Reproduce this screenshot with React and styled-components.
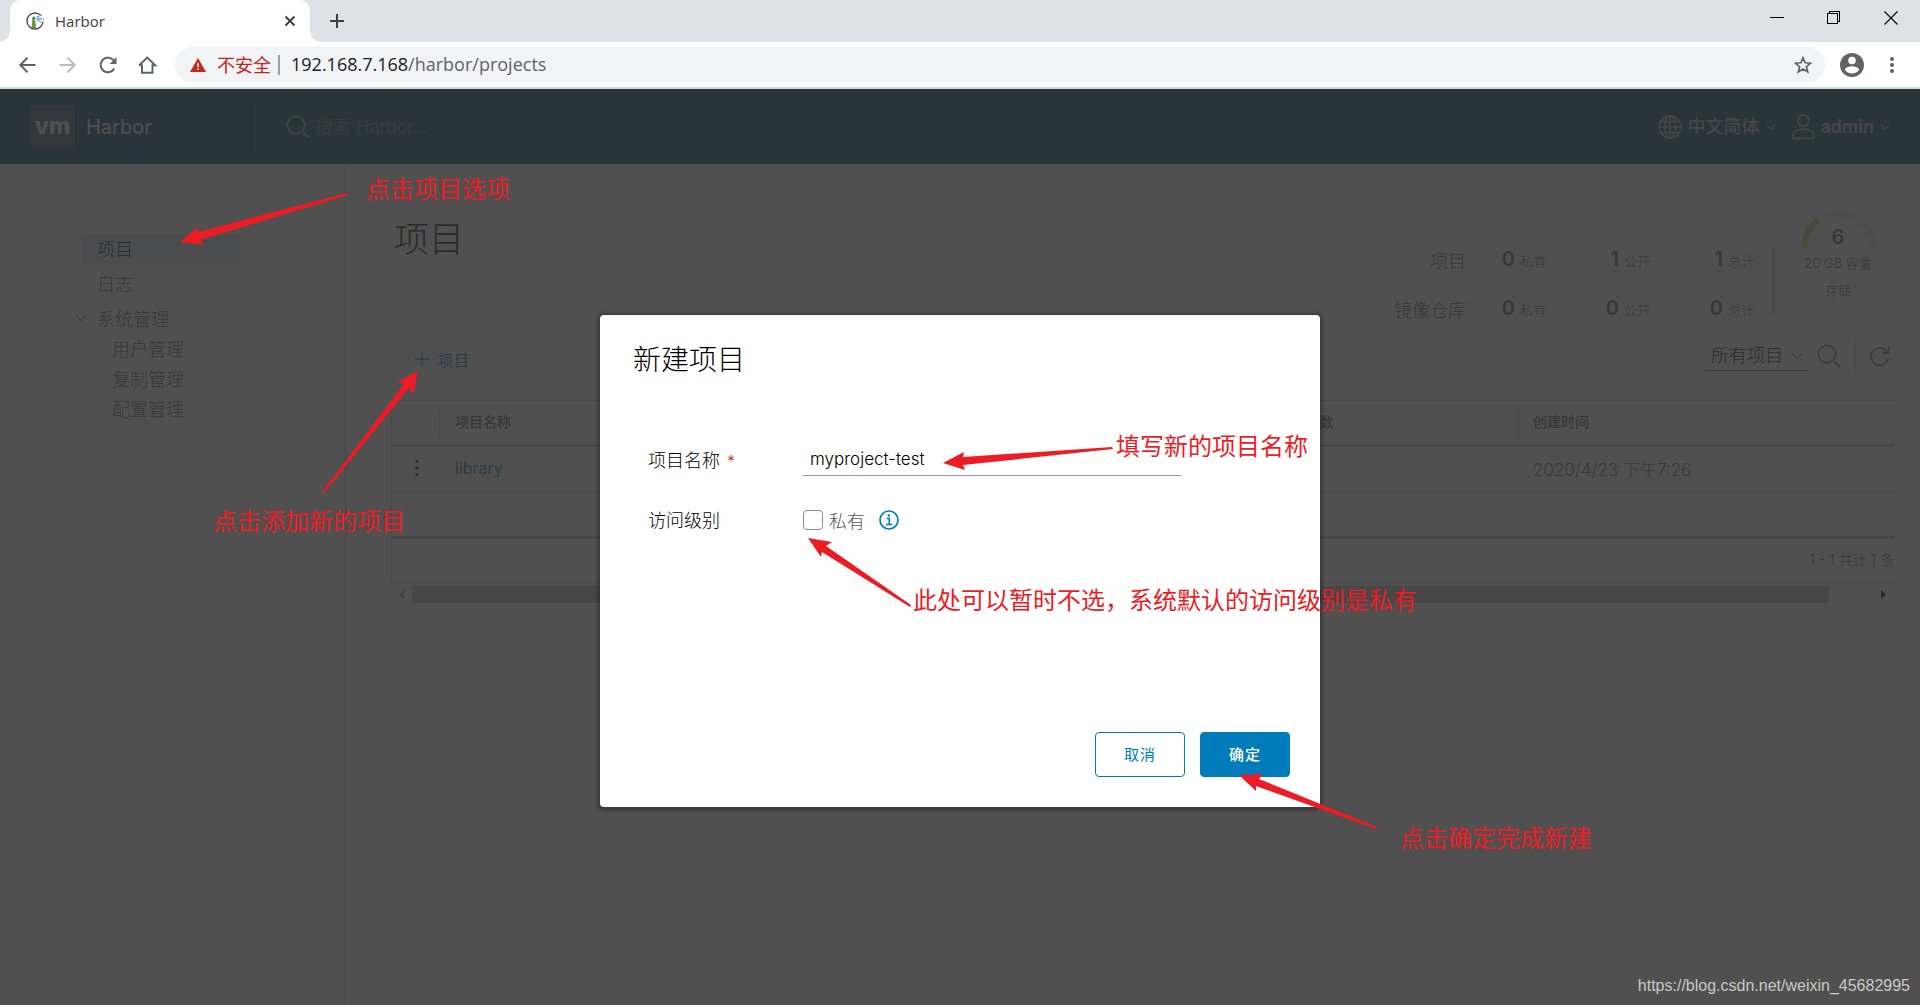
import React from 'react'
import styled, { createGlobalStyle } from 'styled-components'

const uiFont = `"Open Sans", "Noto Sans CJK SC", sans-serif`;
const pageFont = `Inter, "Noto Sans CJK SC", sans-serif`;

const GlobalStyle = createGlobalStyle`
* {
    box-sizing: border-box;
}
body {
    margin: 0;
    font-family: ${pageFont};
    color: #313131;
}
button, input, select {
    font-family: inherit;
}
`;

/* ---------- browser window ---------- */

const Window = styled.div`
position: relative;
display: flex;
flex-direction: column;
min-height: 100vh;
overflow: hidden;
`;

const TabStrip = styled.div`
display: flex;
align-items: stretch;
height: 42px;
padding: 0 22px 0 10px;
background-color: #dee1e6;
font-family: ${uiFont};
`;

const Tab = styled.div`
position: relative;
display: flex;
align-items: center;
gap: 11px;
width: 300px;
padding: 0 14px 0 16px;
border-radius: 10px 10px 0 0;
background-color: #fff;
font-size: 15px;
color: #3c4043;

&::before, &::after {
    content: "";
    position: absolute;
    bottom: 0;
    width: 10px;
    height: 10px;
}
&::before {
    left: -10px;
    background: radial-gradient(circle at 0 0, transparent 9px, #fff 10px);
}
&::after {
    right: -10px;
    background: radial-gradient(circle at 100% 0, transparent 9px, #fff 10px);
}
`;

const TabTitle = styled.span`
flex: 1;
`;

const IconButton = styled.button`
display: flex;
align-items: center;
justify-content: center;
padding: 0;
border: none;
background: none;
color: ${(props) => props.$color || "#5f6368"};
cursor: pointer;
`;

const NewTab = styled(IconButton)`
width: 28px;
margin-left: 13px;
`;

const WindowButtons = styled.div`
display: flex;
gap: 43px;
margin-left: auto;
padding-bottom: 6px;
`;

const Toolbar = styled.div`
display: flex;
align-items: center;
height: 47px;
padding: 0 25px 0 18px;
border-bottom: 2px solid #d9dbe0;
background-color: #fff;
font-family: ${uiFont};
`;

const NavButtons = styled.div`
display: flex;
gap: 20px;
width: 157px;
`;

const AddressBar = styled.div`
display: flex;
flex: 1;
align-items: center;
height: 35px;
padding: 0 13px 0 15px;
border-radius: 18px;
background-color: #f1f3f4;
font-size: 18px;
`;

const Unsafe = styled.span`
margin: 0 8px 0 11px;
padding-right: 7px;
border-right: 2px solid #9aa0a6;
line-height: 20px;
color: #c5221f;
`;

const Url = styled.span`
flex: 1;
padding-bottom: 2px;
margin-left: 3px;
color: #5f6368;

b {
    font-weight: 400;
    color: #202124;
}
`;

const BarActions = styled.div`
display: flex;
align-items: center;
gap: 25px;
margin-left: 15px;
`;

/* ---------- harbor page ---------- */

const Page = styled.div`
position: relative;
display: flex;
flex: 1;
flex-direction: column;
background-color: #fafafa;
`;

const Header = styled.header`
display: flex;
align-items: center;
height: 75px;
padding: 0 30px;
background-color: #004a70;
color: #fafafa;
`;

const Brand = styled.a`
display: flex;
align-items: center;
gap: 11px;
width: 226px;
height: 51px;
border-right: 1px solid #285c7a;
font-size: 20px;
color: inherit;
text-decoration: none;
`;

const Logo = styled.span`
width: 45px;
border-radius: 4px;
background-color: #335a78;
font-size: 23px;
font-weight: 800;
line-height: 43px;
text-align: center;
`;

const Search = styled.label`
display: flex;
flex: 1;
align-items: center;
gap: 4px;
padding-left: 30px;
color: #b5c4cf;
`;

const SearchInput = styled.input`
width: 240px;
padding: 0 0 1px 1px;
border: none;
outline: none;
background: none;
font-size: 18px;
font-weight: 300;
color: #fff;

&::placeholder {
    color: #6d8798;
}
`;

const HeaderMenu = styled.button`
display: flex;
align-items: center;
gap: 6px;
margin-left: 16px;
padding: 0;
border: none;
background: none;
font-size: 18px;
font-weight: ${(props) => props.$weight};
line-height: 26px;
color: #b4c2cc;
`;

const Body = styled.div`
display: flex;
flex: 1;
`;

const Sidebar = styled.nav`
display: flex;
flex-direction: column;
width: 346px;
padding: 70px 105px 0 75px;
border-right: 1px solid #ccc;
font-size: 18px;
font-weight: 300;
`;

const NavLink = styled.a`
display: flex;
align-items: center;
height: 30px;
margin: 0 0 ${(props) => (props.$sub ? "0" : "5px")} 8px;
padding: 0 0 2px ${(props) => (props.$sub ? "29px" : "14px")};
border-radius: 3px 0 0 3px;
background-color: ${(props) => (props.$active ? "#d9e4ea" : "transparent")};
color: ${(props) => (props.$active ? "#000" : "#565656")};
text-decoration: none;
`;

const NavGroup = styled.button`
display: flex;
align-items: center;
gap: 10px;
height: 30px;
padding: 0 0 2px;
border: none;
background: none;
font-size: 18px;
font-weight: 300;
color: #565656;
`;

const Main = styled.main`
flex: 1;
min-width: 0;
padding: 46px 26px 0 45px;
`;

const Summary = styled.div`
display: flex;
justify-content: space-between;
align-items: flex-start;
min-height: 131px;
`;

const Title = styled.h1`
margin: 6px 0 0 3px;
font-size: 35px;
font-weight: 300;
line-height: 46px;
color: #000;
`;

const Stats = styled.div`
display: flex;
align-items: flex-start;
padding-right: 18px;
color: #565656;
`;

const StatGrid = styled.div`
display: grid;
grid-template-columns: 72px 80px 104px 104px;
row-gap: 15px;
margin-top: 33px;
text-align: right;
line-height: 32px;
`;

const StatLabel = styled.span`
font-size: 18px;
font-weight: 300;
line-height: 38px;
height: 32px;
white-space: nowrap;
`;

const Stat = styled.span`
font-size: 13px;
font-weight: 300;
white-space: nowrap;

b {
    margin-right: 5px;
    font-size: 20px;
    font-weight: 600;
}
`;

const StatDivider = styled.div`
width: 3px;
height: 67px;
margin: 38px 25px 0 18px;
background-color: #d8d8d8;
`;

const Gauge = styled.div`
display: flex;
flex-direction: column;
align-items: center;
width: 76px;
font-size: 13px;
font-weight: 300;
line-height: 27px;
white-space: nowrap;
`;

const GaugeDial = styled.div`
position: relative;
height: 40px;

b {
    position: absolute;
    inset: 14px 0 0;
    font-size: 20px;
    font-weight: 600;
    text-align: center;
}
`;

const Actions = styled.div`
display: flex;
align-items: center;
height: 30px;
margin-bottom: 29px;
padding: 0 4px 0 23px;
color: #565656;
`;

const NewProject = styled.button`
display: flex;
align-items: center;
gap: 8px;
margin-right: auto;
padding: 6px 0 0;
border: none;
background: none;
font-size: 15px;
color: #007cbb;
letter-spacing: 1px;
`;

const Filter = styled.label`
position: relative;
display: flex;
align-items: center;
width: 104px;
margin-right: 8px;
border-bottom: 1px solid #565656;
color: #9a9a9a;

svg {
    position: absolute;
    right: 6px;
}
`;

const FilterSelect = styled.select`
appearance: none;
width: 100%;
height: 28px;
padding: 0 0 1px 6px;
border: none;
background: none;
font-size: 18px;
font-weight: 300;
color: #000;
`;

const Separator = styled.div`
width: 2px;
height: 30px;
margin: 0 14px 0 13px;
background-color: #ccc;
`;

const GridView = styled.div`
overflow: hidden;
`;

const Table = styled.table`
width: calc(100% + 47px);
border: 1px solid #ccc;
border-radius: 4px;
border-spacing: 0;
table-layout: fixed;
text-align: left;
`;

const HeadCell = styled.th`
position: relative;
width: ${(props) => props.$width};
height: 46px;
padding: 0 16px 3px;
border-bottom: 3px solid #c4c4c4;
font-size: 14px;
font-weight: 500;
color: #565656;

&:not(:first-child)::before {
    content: "";
    position: absolute;
    left: 0;
    top: 8px;
    width: 1px;
    height: 30px;
    background-color: #ccc;
}
`;

const Cell = styled.td`
height: 46px;
padding: 0 16px 3px;
border-bottom: ${(props) => (props.$last ? "3px solid #c4c4c4" : "1px solid #ccc")};
font-size: ${(props) => (props.$wide ? "17px" : "16px")};
font-weight: 300;
color: #565656;

a {
    color: #007cbb;
    font-weight: 400;
    text-decoration: none;
}
`;

const FootCell = styled.td`
height: 43px;
padding: 0 46px 4px 16px;
font-size: 14px;
font-weight: 300;
text-align: right;
color: #565656;
`;

const ScrollBar = styled.div`
display: flex;
align-items: center;
justify-content: space-between;
height: 17px;
margin-top: 3px;
padding: 0 8px;
color: #8a8a8a;
`;

const ScrollThumb = styled.div`
flex: 1;
height: 17px;
margin: 0 52px 0 8px;
background-color: #c1c1c1;
`;

/* ---------- dialog ---------- */

const Backdrop = styled.div`
position: absolute;
inset: 0;
display: flex;
align-items: center;
justify-content: center;
padding-top: 28px;
background-color: rgba(49, 49, 49, 0.85);
`;

const Modal = styled.form`
display: flex;
flex-direction: column;
width: 720px;
padding: 30px;
border-radius: 4px;
background-color: #fff;
box-shadow: 0 1px 3px 3px rgba(0, 0, 0, 0.25);
`;

const ModalTitle = styled.h2`
margin: 0 0 0 3px;
font-size: 28px;
font-weight: 300;
line-height: 30px;
color: #000;
`;

const Fields = styled.div`
display: flex;
flex-direction: column;
gap: 28px;
min-height: 357px;
padding: 69px 0 0 18px;
`;

const Field = styled.div`
display: flex;
align-items: center;
height: 32px;
font-size: 18px;
font-weight: 300;
`;

const FieldLabel = styled.label`
width: 155px;
padding-bottom: 3px;
color: #000;

span {
    margin-left: 7px;
    font-size: 16px;
    color: #c92100;
}
`;

const TextInput = styled.input`
width: 378px;
height: 32px;
padding: 0 7px 2px;
border: none;
border-bottom: 1px solid #9a9a9a;
outline: none;
font-size: 17px;
font-weight: 300;
color: #000;
`;

const Checkbox = styled.input`
appearance: none;
width: 20px;
height: 20px;
margin: 0 6px 0 0;
border: 1px solid #8c8c8c;
border-radius: 4px;
`;

const CheckLabel = styled.label`
margin-right: 14px;
color: #565656;
`;

const ModalButtons = styled.div`
display: flex;
justify-content: flex-end;
gap: 15px;
`;

const Button = styled.button`
width: 90px;
height: 45px;
padding: 0 0 2px;
border: 1px solid #007cbb;
border-radius: 4px;
background-color: ${(props) => (props.$primary ? "#007cbb" : "#fff")};
font-size: 15px;
font-weight: ${(props) => (props.$primary ? 500 : 400)};
letter-spacing: 1px;
color: ${(props) => (props.$primary ? "#fff" : "#007cbb")};
`;

/* ---------- notes drawn over the page ---------- */

const Arrows = styled.svg`
position: absolute;
left: 0;
top: 0;
fill: #ed1c24;
pointer-events: none;
`;

const Note = styled.span`
position: absolute;
left: ${(props) => props.$x}px;
top: ${(props) => props.$y}px;
font-family: "Noto Sans CJK SC", sans-serif;
font-size: 24px;
line-height: 32px;
color: #ed1c24;
white-space: nowrap;
`;

const Watermark = styled.span`
position: absolute;
right: 10px;
bottom: 9px;
font-family: "Liberation Sans", Arial, sans-serif;
font-size: 16px;
line-height: 20px;
color: #c8c8c8;
`;

const notes = [
    { x: 366, y: 172, text: "点击项目选项" },
    { x: 213, y: 504, text: "点击添加新的项目" },
    { x: 1116, y: 429, text: "填写新的项目名称" },
    { x: 913, y: 583, text: "此处可以暂时不选，系统默认的访问级别是私有" },
    { x: 1400, y: 821, text: "点击确定完成新建" },
];

const arrows = [
    "180,242 198,227 198,232 347,193 348,195 200,240 204,245",
    "418,371 397,382 404,384 322,492 324,493 409,388 413,394",
    "943,463 964,452 963,457 1112,447 1113,449 963,465 965,470",
    "808,538 832,542 826,546 911,605 910,607 822,552 821,557",
    "1239,775 1263,774 1259,779 1377,827 1376,829 1256,786 1256,791",
];

const stats = [
    { label: "项目", values: [[0, "私有"], [1, "公开"], [1, "总计"]] },
    { label: "镜像仓库", values: [[0, "私有"], [0, "公开"], [0, "总计"]] },
];

const Chevron = ({ size = 12, color = "currentColor" }) => (
    <svg width={size} height={size} viewBox="0 0 12 12" fill="none" stroke={color} strokeWidth="1.3">
        <path d="M1 3.5l5 5 5-5" />
    </svg>
);

const Magnifier = () => (
    <svg width="24" height="24" viewBox="0 0 24 24" fill="none" stroke="currentColor" strokeWidth="1.3">
        <circle cx="10" cy="10" r="8.7" />
        <path d="M17 17.5l5.5 5" strokeWidth="1.8" />
    </svg>
);

function BrowserChrome() {
    return (
        <>
            <TabStrip>
                <Tab>
                    <svg width="18" height="18" viewBox="0 0 18 18" fill="none">
                        <circle cx="9" cy="9" r="8" stroke="#505050" strokeWidth="1.4" />
                        <path d="M5.5 16l.8-8h3l.8 8z" fill="#6a9a3c" />
                        <path d="M6 6h3.5v1.5H6zM7 4.5h1.5V6H7z" fill="#3d6b24" />
                        <path d="M9.5 3h8v7h-8z" fill="#fff" />
                        <path d="M10 5.5l6-2.5M10.5 6.5l6 .5M10.5 7.5l5 3" stroke="#6f9fd8" strokeWidth="1.3" />
                    </svg>
                    <TabTitle>Harbor</TabTitle>
                    <IconButton aria-label="关闭标签页" $color="#3c4043">
                        <svg width="12" height="12" viewBox="0 0 12 12" stroke="currentColor" strokeWidth="1.9">
                            <path d="M1.5 1.5l9 9M10.5 1.5l-9 9" />
                        </svg>
                    </IconButton>
                </Tab>
                <NewTab aria-label="打开新的标签页" $color="#3c4043">
                    <svg width="16" height="16" viewBox="0 0 16 16" stroke="currentColor" strokeWidth="2">
                        <path d="M8 1v14M1 8h14" />
                    </svg>
                </NewTab>
                <WindowButtons>
                    <IconButton aria-label="最小化" $color="#000">
                        <svg width="14" height="14" viewBox="0 0 14 14" stroke="currentColor" shapeRendering="crispEdges">
                            <path d="M0 6.5h14" />
                        </svg>
                    </IconButton>
                    <IconButton aria-label="还原" $color="#000">
                        <svg width="14" height="14" viewBox="0 0 14 14" fill="none" stroke="currentColor" shapeRendering="crispEdges">
                            <path d="M.5 2.5h10v10h-10zM2.5 2.5v-2h10v10h-2" />
                        </svg>
                    </IconButton>
                    <IconButton aria-label="关闭" $color="#000">
                        <svg width="14" height="14" viewBox="0 0 14 14" stroke="currentColor" strokeWidth="1.1">
                            <path d="M.5.5l13 13M13.5.5l-13 13" />
                        </svg>
                    </IconButton>
                </WindowButtons>
            </TabStrip>
            <Toolbar>
                <NavButtons>
                    <IconButton aria-label="后退">
                        <svg width="20" height="18" viewBox="0 0 20 18" fill="none" stroke="currentColor" strokeWidth="2">
                            <path d="M17.5 9h-15M9.5 1.8L2.3 9l7.2 7.2" />
                        </svg>
                    </IconButton>
                    <IconButton aria-label="前进" $color="#babcbe">
                        <svg width="20" height="18" viewBox="0 0 20 18" fill="none" stroke="currentColor" strokeWidth="2">
                            <path d="M1.5 9h15M9.5 1.8L16.7 9l-7.2 7.2" />
                        </svg>
                    </IconButton>
                    <IconButton aria-label="重新加载">
                        <svg width="20" height="18" viewBox="0 0 20 18" fill="none" stroke="currentColor" strokeWidth="2">
                            <path d="M16.3 12.5A7.3 7.3 0 1 1 15.5 4.2" />
                            <path d="M18.5 1v7h-7z" fill="currentColor" stroke="none" />
                        </svg>
                    </IconButton>
                    <IconButton aria-label="主页">
                        <svg width="20" height="18" viewBox="0 0 20 18" fill="none" stroke="currentColor" strokeWidth="2">
                            <path d="M4 8.5v8.3h10.500V8.5M1.2 9.3L9.2 1.6l8 7.7h-3M4.2 9.3h-3" />
                        </svg>
                    </IconButton>
                </NavButtons>
                <AddressBar>
                    <svg width="16" height="14" viewBox="0 0 16 14">
                        <path d="M8 0l8 14H0z" fill="#c5291f" />
                        <path d="M7.2 5h1.6v4H7.2zM7.2 10.2h1.6v1.6H7.2z" fill="#fff" />
                    </svg>
                    <Unsafe>不安全</Unsafe>
                    <Url><b>192.168.7.168</b>/harbor/projects</Url>
                    <IconButton aria-label="收藏">
                        <svg width="18" height="18" viewBox="0 0 18 18" fill="none" stroke="currentColor" strokeWidth="1.7">
                            <path d="M9 1.8l2.1 5 5.4.4-4.1 3.5 1.3 5.2L9 13.1l-4.7 2.8 1.3-5.2-4.1-3.5 5.4-.4z" />
                        </svg>
                    </IconButton>
                </AddressBar>
                <BarActions>
                    <IconButton aria-label="用户">
                        <svg width="24" height="24" viewBox="0 0 24 24">
                            <circle cx="12" cy="12" r="12" fill="currentColor" />
                            <circle cx="12" cy="7.5" r="3.8" fill="#fff" />
                            <path d="M4.7 16.5c1.2-2.5 4.7-3.3 7.3-3.3s6.1.8 7.3 3.3a8.7 8.7 0 0 1-14.6 0z" fill="#fff" />
                        </svg>
                    </IconButton>
                    <IconButton aria-label="菜单">
                        <svg width="6" height="18" viewBox="0 0 6 18" fill="currentColor">
                            <circle cx="3" cy="3" r="2" />
                            <circle cx="3" cy="9" r="2" />
                            <circle cx="3" cy="15" r="2" />
                        </svg>
                    </IconButton>
                </BarActions>
            </Toolbar>
        </>
    )
}

function HarborHeader() {
    return (
        <Header>
            <Brand href="#"><Logo>vm</Logo>Harbor</Brand>
            <Search>
                <Magnifier />
                <SearchInput type="text" placeholder="搜索 Harbor..." aria-label="搜索 Harbor" />
            </Search>
            <HeaderMenu $weight="500">
                <svg width="24" height="24" viewBox="0 0 24 24" fill="none" stroke="currentColor" strokeWidth="1.3">
                    <circle cx="12" cy="12" r="11" />
                    <ellipse cx="12" cy="12" rx="5.5" ry="11" />
                    <path d="M12 1v22M1 12h22M3 6.5h18M3 17.5h18" />
                </svg>
                中文简体
                <Chevron size={10} />
            </HeaderMenu>
            <HeaderMenu $weight="600">
                <svg width="23" height="26" viewBox="0 0 23 26" fill="none" stroke="currentColor" strokeWidth="1.5">
                    <circle cx="11.5" cy="6.5" r="5.5" />
                    <path d="M1 24.5v-4.5c2.5-3.5 6.5-4.8 10.5-4.8s8 1.3 10.5 4.8v4.5z" strokeLinejoin="round" />
                </svg>
                admin
                <Chevron size={10} />
            </HeaderMenu>
        </Header>
    )
}

function SideNav() {
    return (
        <Sidebar>
            <NavLink href="#" $active>项目</NavLink>
            <NavLink href="#">日志</NavLink>
            <NavGroup><Chevron color="#9a9a9a" />系统管理</NavGroup>
            <NavLink href="#" $sub>用户管理</NavLink>
            <NavLink href="#" $sub>复制管理</NavLink>
            <NavLink href="#" $sub>配置管理</NavLink>
        </Sidebar>
    )
}

function ProjectTable() {
    return (
        <GridView>
            <Table>
                <thead>
                    <tr>
                        <HeadCell $width="47px" aria-label="操作" />
                        <HeadCell>项目名称</HeadCell>
                        <HeadCell />
                        <HeadCell />
                        <HeadCell>镜像仓库数</HeadCell>
                        <HeadCell $width="423px">创建时间</HeadCell>
                    </tr>
                </thead>
                <tbody>
                    <tr>
                        <Cell>
                            <IconButton aria-label="更多操作" $color="#313131">
                                <svg width="18" height="18" viewBox="0 0 18 18" fill="currentColor">
                                    <circle cx="9" cy="2.5" r="1.7" />
                                    <circle cx="9" cy="9" r="1.7" />
                                    <circle cx="9" cy="15.5" r="1.7" />
                                </svg>
                            </IconButton>
                        </Cell>
                        <Cell><a href="#">library</a></Cell>
                        <Cell />
                        <Cell />
                        <Cell />
                        <Cell $wide>2020/4/23 下午7:26</Cell>
                    </tr>
                    <tr>
                        <Cell colSpan={6} $last />
                    </tr>
                </tbody>
                <tfoot>
                    <tr>
                        <FootCell colSpan={6}>1 - 1 共计 1 条</FootCell>
                    </tr>
                </tfoot>
            </Table>
            <ScrollBar>
                <svg width="5" height="9" viewBox="0 0 5 9" fill="currentColor"><path d="M5 0v9L0 4.5z" /></svg>
                <ScrollThumb />
                <svg width="5" height="9" viewBox="0 0 5 9" fill="#000"><path d="M0 0v9l5-4.5z" /></svg>
            </ScrollBar>
        </GridView>
    )
}

function Projects() {
    return (
        <Main>
            <Summary>
                <Title>项目</Title>
                <Stats>
                    <StatGrid>
                        {stats.map((row) => (
                            <React.Fragment key={row.label}>
                                <StatLabel>{row.label}</StatLabel>
                                {row.values.map(([count, name]) => (
                                    <Stat key={name}><b>{count}</b>{name}</Stat>
                                ))}
                            </React.Fragment>
                        ))}
                    </StatGrid>
                    <StatDivider />
                    <Gauge>
                        <GaugeDial>
                            <svg width="75" height="38" viewBox="0 0 75 38" fill="none" strokeWidth="6">
                                <path d="M3.5 37.5a34 34 0 0 1 68 0" stroke="#eee" />
                                <path d="M3.5 37.5a34 34 0 0 1 14-27.5" stroke="#a8e070" />
                            </svg>
                            <b>6</b>
                        </GaugeDial>
                        <span>20 GB 容量</span>
                        <span>存储</span>
                    </Gauge>
                </Stats>
            </Summary>
            <Actions>
                <NewProject>
                    <svg width="16" height="16" viewBox="0 0 16 16" stroke="currentColor" strokeWidth="1.3">
                        <path d="M8 1v14M1 8h14" />
                    </svg>
                    项目
                </NewProject>
                <Filter>
                    <FilterSelect aria-label="项目筛选">
                        <option>所有项目</option>
                    </FilterSelect>
                    <Chevron />
                </Filter>
                <IconButton aria-label="搜索" $color="#565656"><Magnifier /></IconButton>
                <Separator />
                <IconButton aria-label="刷新" $color="#565656">
                    <svg width="20" height="22" viewBox="0 0 20 22" fill="none" stroke="currentColor" strokeWidth="1.4">
                        <path d="M18 14.5A8.7 8.7 0 1 1 17.5 7.5" />
                        <path d="M18.8 1.5v6.5h-6.5" />
                    </svg>
                </IconButton>
            </Actions>
            <ProjectTable />
        </Main>
    )
}

function NewProjectDialog() {
    const [name, setName] = React.useState("myproject-test");
    return (
        <Backdrop>
            <Modal onSubmit={(e) => e.preventDefault()}>
                <ModalTitle>新建项目</ModalTitle>
                <Fields>
                    <Field>
                        <FieldLabel htmlFor="project-name">项目名称<span>*</span></FieldLabel>
                        <TextInput
                            id="project-name"
                            type="text"
                            value={name}
                            onChange={(e) => setName(e.target.value)}
                        />
                    </Field>
                    <Field>
                        <FieldLabel as="span">访问级别</FieldLabel>
                        <Checkbox id="project-private" type="checkbox" />
                        <CheckLabel htmlFor="project-private">私有</CheckLabel>
                        <svg width="20" height="20" viewBox="0 0 20 20" fill="none" stroke="#007cbb">
                            <circle cx="10" cy="10" r="9" strokeWidth="1.7" />
                            <path d="M7.5 8.5h2.8v6M7 14.5h6.2" strokeWidth="1.6" />
                            <circle cx="9.8" cy="5.5" r="1.2" fill="#007cbb" stroke="none" />
                        </svg>
                    </Field>
                </Fields>
                <ModalButtons>
                    <Button type="button">取消</Button>
                    <Button type="submit" $primary>确定</Button>
                </ModalButtons>
            </Modal>
        </Backdrop>
    )
}

function App() {
    return (
        <Window>
            <GlobalStyle />
            <BrowserChrome />
            <Page>
                <HarborHeader />
                <Body>
                    <SideNav />
                    <Projects />
                </Body>
                <NewProjectDialog />
            </Page>
            <Arrows width="100%" height="100%">
                {arrows.map((points) => <polygon key={points} points={points} />)}
            </Arrows>
            {notes.map((note) => (
                <Note key={note.text} $x={note.x} $y={note.y}>{note.text}</Note>
            ))}
            <Watermark>https://blog.csdn.net/weixin_45682995</Watermark>
        </Window>
    )
}

export default App
